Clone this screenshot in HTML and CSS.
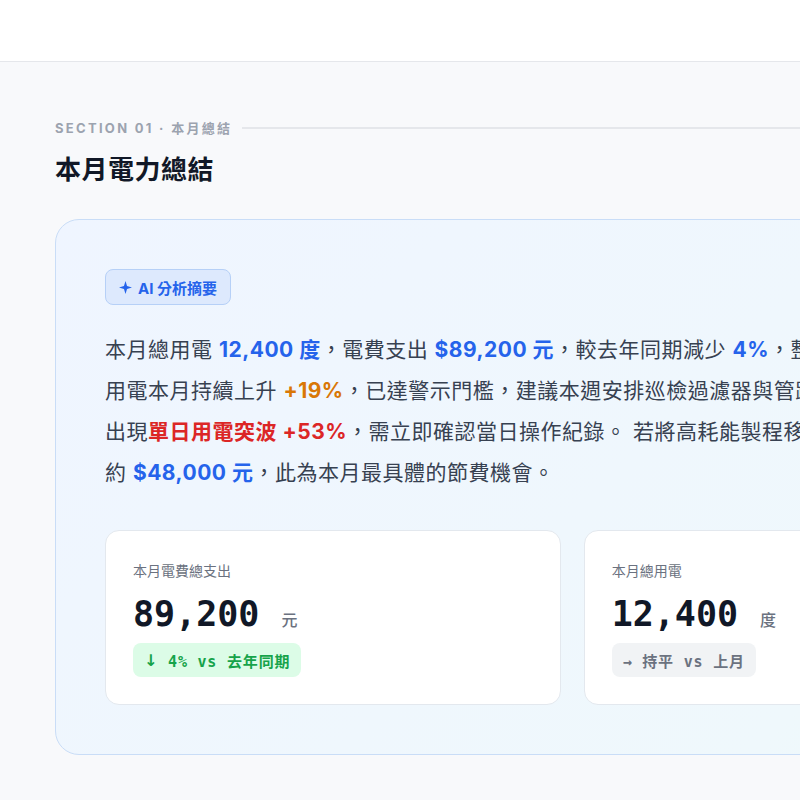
FILE: index.html
```html
<!DOCTYPE html>
<html lang="zh-Hant">
<head>
    <meta charset="UTF-8">
    <meta name="viewport" content="width=device-width, initial-scale=1.0">
    <title>電力月報</title>
    <link rel="stylesheet" href="styles.css">
</head>
<body>
    <div class="page">
        <header class="topbar"></header>

        <main class="main">
            <!-- SECTION 01 -->
            <section class="section">
                <div class="section-label">
                    <span>SECTION 01 · 本月總結</span>
                    <span class="section-line"></span>
                </div>
                <h2 class="section-title">本月電力總結</h2>

                <div class="summary-card">
                    <div class="ai-badge">
                        <svg width="13" height="13" viewBox="0 0 12 12"><path d="M6 0 L7.4 4.6 L12 6 L7.4 7.4 L6 12 L4.6 7.4 L0 6 L4.6 4.6 Z" fill="#2563eb"/></svg>
                        AI 分析摘要
                    </div>

                    <p class="summary-text">
                        本月總用電 <b class="hl-blue">12,400 度</b>，電費支出 <b class="hl-blue">$89,200 元</b>，較去年同期減少 <b class="hl-blue">4%</b>，整體表現穩定。但空壓機<br>
                        用電本月持續上升 <b class="hl-orange">+19%</b>，已達警示門檻，建議本週安排巡檢過濾器與管路洩漏。另外 3 月 18 日<br>
                        出現<b class="hl-red">單日用電突波 +53%</b>，需立即確認當日操作紀錄。 若將高耗能製程移至離峰時段，預估每月可節省<br>
                        約 <b class="hl-blue">$48,000 元</b>，此為本月最具體的節費機會。
                    </p>

                    <div class="metric-grid">
                        <div class="metric-card">
                            <div class="metric-label">本月電費總支出</div>
                            <div class="metric-value">89,200<span class="metric-unit">元</span></div>
                            <span class="metric-trend trend-down"><span class="trend-arrow">↓</span> 4% vs 去年同期</span>
                        </div>
                        <div class="metric-card">
                            <div class="metric-label">本月總用電</div>
                            <div class="metric-value">12,400<span class="metric-unit">度</span></div>
                            <span class="metric-trend trend-flat">→ 持平 vs 上月</span>
                        </div>
                        <div class="metric-card">
                            <div class="metric-label">平均每日用電</div>
                            <div class="metric-value">400<span class="metric-unit">度</span></div>
                            <span class="metric-trend trend-flat">→ 持平 vs 上月</span>
                        </div>
                    </div>
                </div>
            </section>
        </main>
    </div>
</body>
</html>
```

FILE: styles.css
```css
html, body {
    margin: 0;
    padding: 0;
    overflow: hidden;
}
body {
    font-family: "Inter", "Noto Sans CJK TC", sans-serif;
    background: #f8f9fb;
    color: #374151;
}
.page {
    width: 1623px;
}
.topbar {
    height: 61px;
    background: #fff;
    border-bottom: 1px solid #e5e7eb;
}
.main {
    padding: 57px 55px 60px;
}

/* section header */
.section-label {
    display: flex;
    align-items: center;
    gap: 10px;
    font-size: 13px;
    font-weight: 700;
    letter-spacing: 2.3px;
    color: #9ca3af;
    line-height: 18px;
}
.section-line {
    flex: 1;
    height: 2px;
    background: #e5e7eb;
}
.section-title {
    margin: 15px 0 31px;
    font-size: 26px;
    font-weight: 700;
    letter-spacing: 0.5px;
    color: #111827;
    line-height: 36px;
}

/* AI summary card */
.summary-card {
    border: 1px solid #c9ddf7;
    border-radius: 24px;
    background: linear-gradient(135deg, #eff5ff 0%, #eff8fc 60%, #eefaf7 100%);
    padding: 49px;
}
.ai-badge {
    display: inline-flex;
    align-items: center;
    gap: 6px;
    height: 34px;
    padding: 0 13px;
    border: 1px solid #b6d0f7;
    border-radius: 8px;
    background: #dde9fd;
    color: #2563eb;
    font-size: 15px;
    font-weight: 700;
}
.summary-text {
    margin: 24px 0 37px;
    font-size: 21px;
    letter-spacing: 0.5px;
    line-height: 41px;
    color: #374151;
}
.summary-text b {
    font-weight: 700;
}
.hl-blue { color: #2563eb; }
.hl-orange { color: #d97706; }
.hl-red { color: #dc2626; }

/* metric cards */
.metric-grid {
    display: grid;
    grid-template-columns: repeat(3, 1fr);
    gap: 23px;
}
.metric-card {
    display: flex;
    flex-direction: column;
    align-items: flex-start;
    background: #fff;
    border: 1px solid #e3e8ee;
    border-radius: 14px;
    padding: 30px 27px 27px;
}
.metric-label {
    font-size: 14px;
    color: #6b7280;
    line-height: 20px;
    height: 20px;
}
.metric-value {
    display: flex;
    align-items: baseline;
    height: 40px;
    margin-top: 13px;
    font-family: "DejaVu Sans Mono", monospace;
    font-size: 35px;
    font-weight: 700;
    color: #111827;
    line-height: 40px;
}
.metric-unit {
    margin-left: 22px;
    font-family: "Inter", "Noto Sans CJK TC", sans-serif;
    font-size: 16px;
    font-weight: 500;
    color: #6b7280;
}
.metric-trend {
    display: inline-flex;
    align-items: center;
    height: 34px;
    margin-top: 9px;
    padding: 0 11px;
    border-radius: 8px;
    font-family: "DejaVu Sans Mono", "Noto Sans CJK TC", monospace;
    font-size: 15px;
    font-weight: 700;
    letter-spacing: 0.8px;
    white-space: pre;
}
.trend-arrow {
    font-family: "DejaVu Sans", sans-serif;
    font-size: 16px;
}
.trend-down {
    background: #dcfce7;
    color: #16a34a;
}
.trend-flat {
    background: #f1f3f5;
    color: #6b7280;
}
```
